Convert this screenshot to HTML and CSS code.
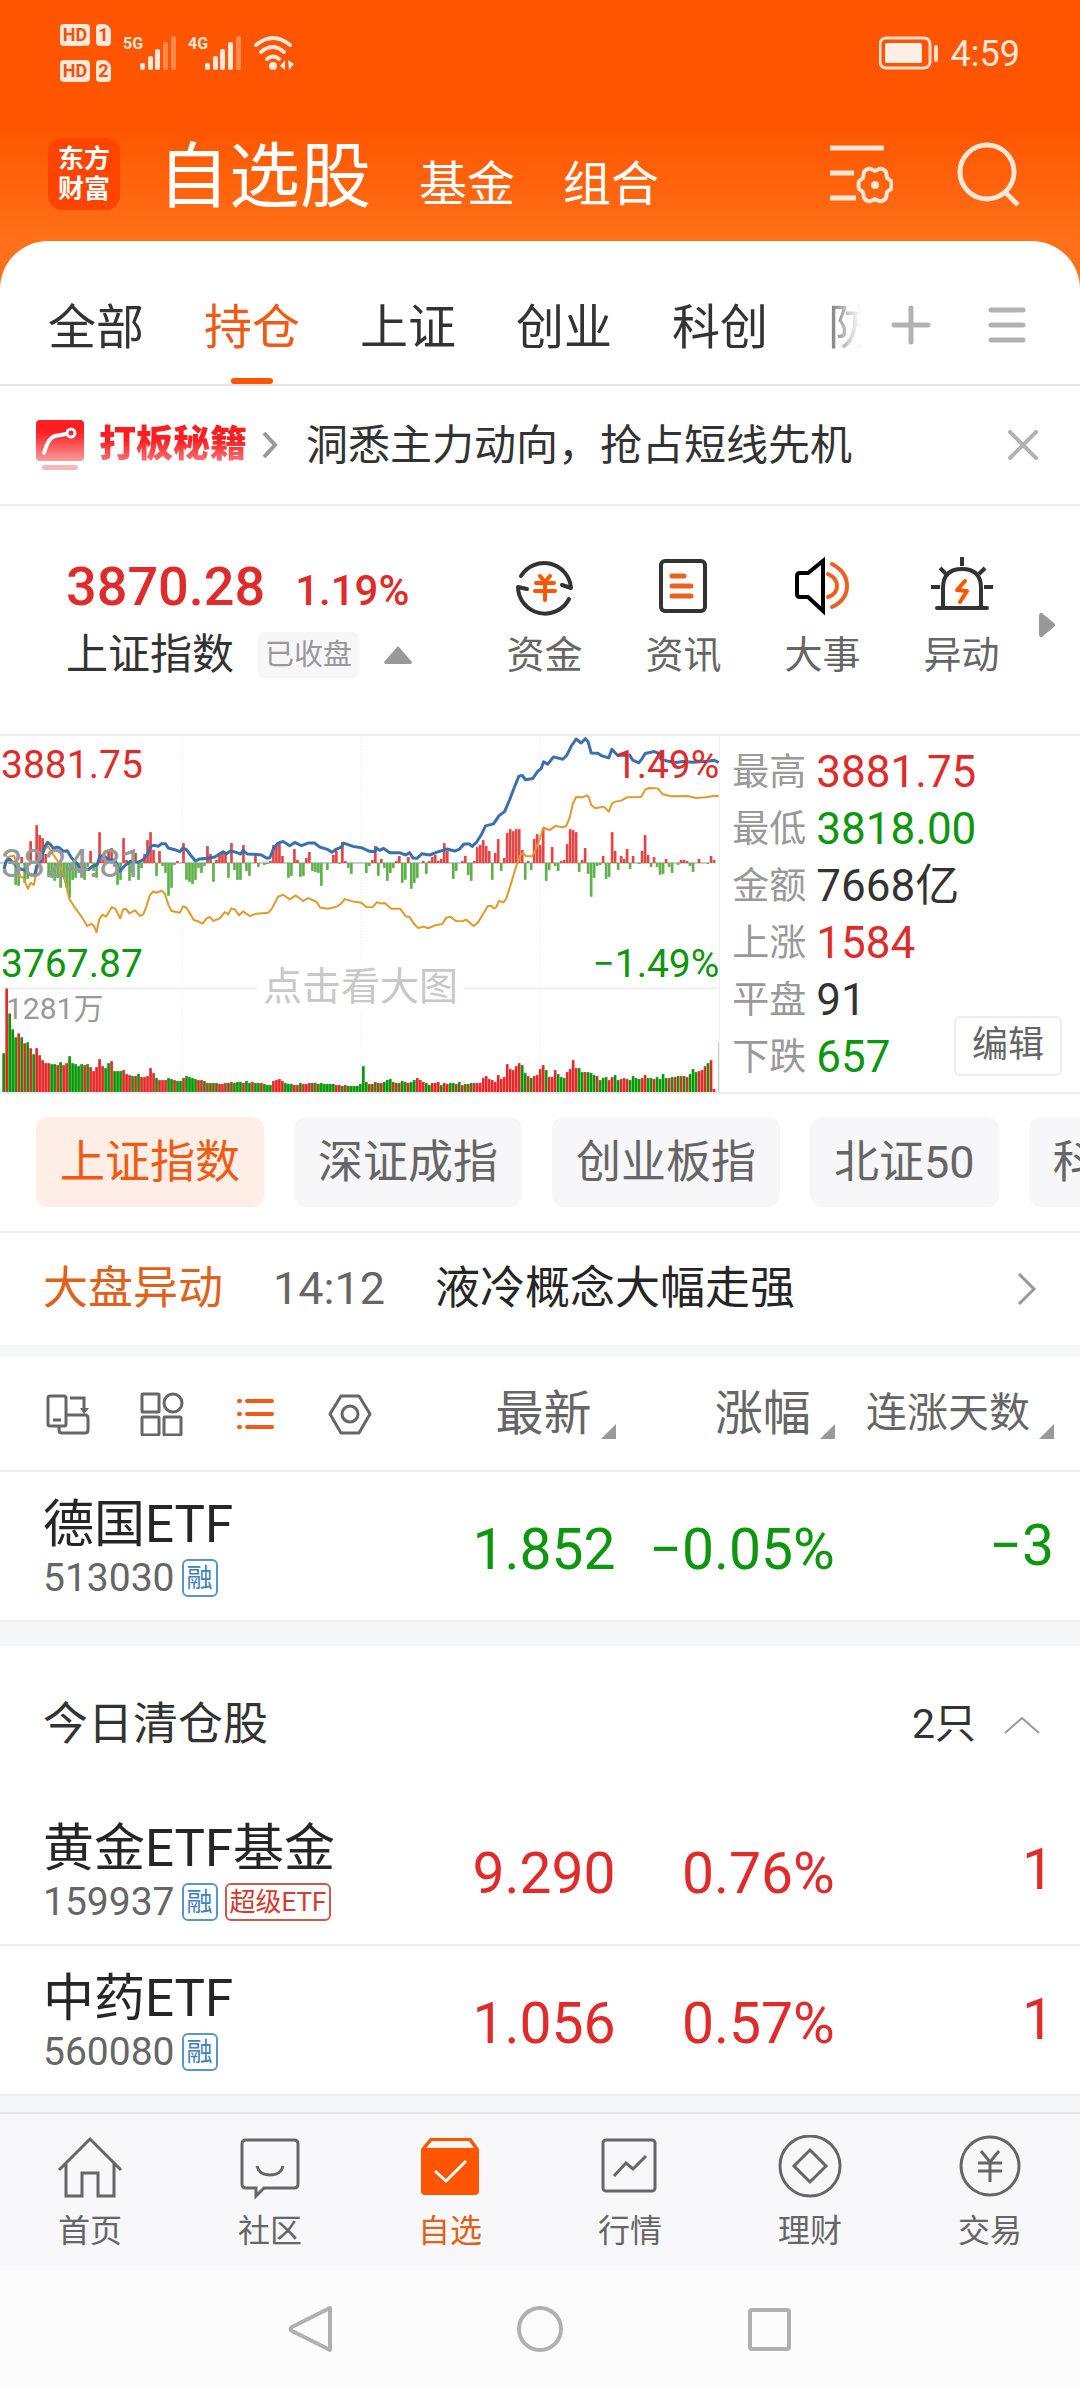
FILE: index.html
```html
<!DOCTYPE html>
<html lang="zh-CN">
<head>
  <meta charset="UTF-8" />
  <meta name="viewport" content="width=device-width, initial-scale=1" />
  <title>自选股</title>
  <link rel="stylesheet" href="styles.css">
</head>
<body>
  <header class="top">
    <div class="status-bar">
      <div class="status-left">
        <div class="sims">
          <div class="sim"><span class="hd">HD</span><span class="sim-no">1</span></div>
          <div class="sim"><span class="hd">HD</span><span class="sim-no">2</span></div>
        </div>
        <div class="signal">
          <span class="net">5G</span>
          <svg width="36" height="34" viewBox="0 0 36 34">
            <g fill="#ffe8da"><rect x="0" y="27" width="5" height="7" rx="2"/><rect x="8" y="20" width="5" height="14" rx="2"/><rect x="15" y="13" width="5" height="21" rx="2"/></g>
            <g fill="#ff8a4d"><rect x="23" y="6" width="5" height="28" rx="2"/><rect x="31" y="0" width="5" height="34" rx="2"/></g>
          </svg>
        </div>
        <div class="signal">
          <span class="net">4G</span>
          <svg width="36" height="34" viewBox="0 0 36 34">
            <g fill="#ffe8da"><rect x="0" y="27" width="5" height="7" rx="2"/><rect x="8" y="20" width="5" height="14" rx="2"/><rect x="15" y="13" width="5" height="21" rx="2"/><rect x="23" y="6" width="5" height="28" rx="2"/></g>
            <rect x="31" y="0" width="5" height="34" rx="2" fill="#ff8a4d"/>
          </svg>
        </div>
        <svg width="42" height="36" viewBox="0 0 42 36">
          <g fill="none" stroke="#ffe8da" stroke-width="4" stroke-linecap="round"><path d="M3 10Q20 -4 37 10"/><path d="M8 17Q20 7 31 17"/><path d="M14 24Q20 19 26 24"/></g>
          <circle cx="20" cy="31" r="4" fill="#ffe8da"/>
          <path d="M27 31L32 25V35ZM35 25L41 29L36 35Z" fill="#ffe8da"/>
        </svg>
      </div>
      <div class="status-right">
        <svg width="60" height="34" viewBox="0 0 60 34">
          <rect x="1" y="2" width="50" height="30" rx="6" fill="none" stroke="#ffe0cf" stroke-width="3"/>
          <rect x="6" y="7" width="37" height="20" rx="2" fill="#ffeee6"/>
          <rect x="55" y="9" width="4" height="17" rx="2" fill="#ffe0cf"/>
        </svg>
        <span class="clock">4:59</span>
      </div>
    </div>
    <div class="app-bar">
      <div class="logo">东方<br>财富</div>
      <nav class="app-nav">
        <a class="current" href="#">自选股</a>
        <a href="#">基金</a>
        <a href="#">组合</a>
      </nav>
      <button class="icon-btn" aria-label="设置">
        <svg width="64" height="60" viewBox="0 0 64 60" fill="none" stroke="#ffe6d6" stroke-width="5">
          <path d="M1 4H55M1 29H25M1 54H27"/>
          <path transform="translate(46 41)" stroke-width="4" stroke-linejoin="round" d="M16 4L12 7L11 13Q8 17 4 16L0 14L-4 16Q-8 17 -11 13L-12 7L-16 4Q-17 0 -16 -4L-12 -7L-11 -13Q-8 -17 -4 -16L0 -14L4 -16Q8 -17 11 -13L12 -7L16 -4Q17 0 16 4Z"/>
          <circle cx="46" cy="41" r="4" fill="#ffe6d6" stroke="none"/>
        </svg>
      </button>
      <button class="icon-btn" aria-label="搜索">
        <svg width="64" height="66" viewBox="0 0 64 66" fill="none" stroke="#ffe6d6" stroke-width="5">
          <circle cx="30" cy="31" r="27"/>
          <path d="M48 51L61 64"/>
        </svg>
      </button>
    </div>
  </header>

  <main>
    <div class="tabs">
      <nav class="tab-list">
        <a href="#">全部</a>
        <a class="active" href="#">持仓</a>
        <a href="#">上证</a>
        <a href="#">创业</a>
        <a href="#">科创</a>
        <a href="#">防御</a>
      </nav>
      <button class="icon-btn" aria-label="添加">
        <svg width="40" height="40" viewBox="0 0 40 40" stroke="#b2b2b2" stroke-width="5" stroke-linecap="round"><path d="M3 20H37M20 3V37"/></svg>
      </button>
      <button class="icon-btn" aria-label="更多分组">
        <svg width="40" height="40" viewBox="0 0 40 40" stroke="#b2b2b2" stroke-width="5" stroke-linecap="round"><path d="M4 5H36M4 20H36M4 35H36"/></svg>
      </button>
    </div>

    <div class="promo">
      <svg width="48" height="50" viewBox="0 0 48 50">
        <defs><linearGradient id="promoRed" x1="0" y1="0" x2="0" y2="1"><stop offset="0" stop-color="#fb1f22"/><stop offset="0.3" stop-color="#fb1f22"/><stop offset="1" stop-color="#f99a9a"/></linearGradient></defs>
        <rect width="48" height="41" rx="4" fill="url(#promoRed)"/>
        <rect x="6" y="45" width="36" height="5" rx="2" fill="#f9b8b8"/>
        <path d="M8 33Q12 18 19 16L30 14" fill="none" stroke="#fff" stroke-width="4" stroke-linecap="round"/>
        <circle cx="35" cy="13" r="4" fill="none" stroke="#fff" stroke-width="3"/>
      </svg>
      <strong>打板秘籍</strong>
      <svg width="16" height="28" viewBox="0 0 16 28" fill="none" stroke="#999" stroke-width="4"><path d="M2 2L13 14L2 26"/></svg>
      <a href="#">洞悉主力动向，抢占短线先机</a>
      <button class="icon-btn" aria-label="关闭">
        <svg width="30" height="30" viewBox="0 0 30 30" stroke="#b2b2b2" stroke-width="4" stroke-linecap="round"><path d="M2 2L28 28M28 2L2 28"/></svg>
      </button>
    </div>

    <section class="summary">
      <div class="index">
        <div class="index-value"><b>3870.28</b><span>1.19%</span></div>
        <div class="index-name">
          <span>上证指数</span>
          <span class="closed">已收盘</span>
          <svg width="28" height="18" viewBox="0 0 28 18"><path d="M14 0L28 16Q28 18 26 18H2Q0 18 0 16Z" fill="#999"/></svg>
        </div>
      </div>
      <nav class="actions">
        <a href="#">
          <svg width="64" height="64" viewBox="0 0 64 64" fill="none" stroke="#333" stroke-width="4" stroke-linecap="round" stroke-linejoin="round">
            <path d="M8 22A27 27 0 0 1 58 34L49 31M56 45A27 27 0 0 1 5 33L14 35"/>
            <path d="M27 22L32 28L37 22M23 29H41M22 37H42M32 29V46" stroke="#ff5500"/>
          </svg>
          资金
        </a>
        <a href="#">
          <svg width="64" height="64" viewBox="0 0 64 64" fill="none" stroke="#333" stroke-width="4" stroke-linecap="round">
            <rect x="9" y="7" width="44" height="50" rx="4"/>
            <path d="M20 22H32M20 32H39M20 42H39" stroke="#eb6120" stroke-width="5"/>
          </svg>
          资讯
        </a>
        <a href="#">
          <svg width="64" height="64" viewBox="0 0 64 64" fill="none" stroke="#000" stroke-width="4">
            <path d="M6 22Q6 19 9 19H17L32 7V57L17 43H9Q6 43 6 40Z"/>
            <path d="M37 20Q46 24 46 32T37 43M41 10Q56 18 56 32T41 53" stroke="#eb6120" stroke-linecap="round"/>
          </svg>
          大事
        </a>
        <a href="#">
          <svg width="64" height="64" viewBox="0 0 64 64" fill="none" stroke="#333" stroke-width="4" stroke-linejoin="round">
            <path d="M13 54V34Q13 15 32 15T51 34V54M7 54H57" stroke-linecap="round"/>
            <path d="M32 3V12M10 14L16 20M55 14L49 20M1 33H10M54 33H63"/>
            <path d="M35 27L27 36L37 37L30 48" stroke="#ff5500" stroke-linecap="round"/>
          </svg>
          异动
        </a>
      </nav>
      <svg class="next" width="16" height="26" viewBox="0 0 16 26"><path d="M0 3Q1 -1 4 2L15 11Q17 13 15 15L4 24Q1 27 0 23Z" fill="#999"/></svg>
    </section>

    <section class="market">
      <div class="chart">
        <svg id="chart" viewBox="0 27 2160 1074" preserveAspectRatio="none"></svg>
        <span class="lbl high up">3881.75</span>
        <span class="lbl high right up">1.49%</span>
        <span class="lbl mid">3824.81</span>
        <span class="lbl low down">3767.87</span>
        <span class="lbl low right down">−1.49%</span>
        <span class="lbl vol">1281万</span>
        <a class="enlarge" href="#">点击看大图</a>
      </div>
      <div class="stats">
        <dl>
          <div><dt>最高</dt><dd class="up">3881.75</dd></div>
          <div><dt>最低</dt><dd class="down">3818.00</dd></div>
          <div><dt>金额</dt><dd>7668亿</dd></div>
          <div><dt>上涨</dt><dd class="up">1584</dd></div>
          <div><dt>平盘</dt><dd>91</dd></div>
          <div><dt>下跌</dt><dd class="down">657</dd></div>
        </dl>
        <button class="edit">编辑</button>
      </div>
    </section>

    <div class="chips">
      <button class="active">上证指数</button>
      <button>深证成指</button>
      <button>创业板指</button>
      <button>北证50</button>
      <button>科创50</button>
    </div>

    <a class="news" href="#">
      <strong>大盘异动</strong>
      <time>14:12</time>
      <span>液冷概念大幅走强</span>
      <svg width="20" height="32" viewBox="0 0 20 32" fill="none" stroke="#999" stroke-width="3"><path d="M2 1L17 16L2 31"/></svg>
    </a>

    <table class="stocks">
      <colgroup><col class="c-name"><col class="c-price"><col class="c-pct"><col></colgroup>
      <thead>
        <tr>
          <th>
            <div class="tools">
              <button class="icon-btn" aria-label="横屏">
                <svg width="44" height="44" viewBox="0 0 44 44" fill="none" stroke="#666" stroke-width="3">
                  <rect x="2" y="4" width="18" height="30" rx="2"/><path d="M7 28H15M13 34V38Q13 41 16 41H39Q42 41 42 38V26Q42 23 39 23H20M24 6H38V18"/><path d="M34 16H43L38 22Z" fill="#666" stroke="none"/>
                </svg>
              </button>
              <button class="icon-btn" aria-label="宫格">
                <svg width="44" height="44" viewBox="0 0 44 44" fill="none" stroke="#666" stroke-width="3">
                  <rect x="2" y="2" width="17" height="18" rx="1"/><circle cx="33" cy="11" r="9"/><rect x="2" y="25" width="17" height="18" rx="1"/><rect x="24" y="25" width="17" height="18" rx="1"/>
                </svg>
              </button>
              <button class="icon-btn" aria-label="列表">
                <svg width="44" height="44" viewBox="0 0 44 44" fill="none" stroke="#f05a14" stroke-width="4" stroke-linecap="round"><path d="M13 9H38M13 22H38M13 35H38M5 9H6M5 22H6M5 35H6"/></svg>
              </button>
              <button class="icon-btn" aria-label="列表设置">
                <svg width="44" height="44" viewBox="0 0 44 44" fill="none" stroke="#666" stroke-width="3" stroke-linejoin="round"><path d="M13 4H31L42 22L31 41H13L2 22Z"/><circle cx="22" cy="22" r="8"/></svg>
              </button>
            </div>
          </th>
          <th><button class="sort">最新</button></th>
          <th><button class="sort">涨幅</button></th>
          <th><button class="sort small">连涨天数</button></th>
        </tr>
      </thead>
      <tbody>
        <tr>
          <td><div class="name">德国ETF</div><div class="code">513030<i>融</i></div></td>
          <td class="down">1.852</td>
          <td class="down">−0.05%</td>
          <td class="down">−3</td>
        </tr>
      </tbody>
    </table>

    <section class="cleared">
      <div class="cleared-head">
        <h2>今日清仓股</h2>
        <span>2只</span>
        <button class="icon-btn" aria-label="收起">
          <svg width="36" height="18" viewBox="0 0 36 18" fill="none" stroke="#999" stroke-width="2"><path d="M1 17L18 2L35 17"/></svg>
        </button>
      </div>
      <table class="stocks">
        <colgroup><col class="c-name"><col class="c-price"><col class="c-pct"><col></colgroup>
        <tbody>
          <tr>
            <td><div class="name">黄金ETF基金</div><div class="code">159937<i>融</i><i class="super">超级ETF</i></div></td>
            <td class="up">9.290</td>
            <td class="up">0.76%</td>
            <td class="up">1</td>
          </tr>
          <tr>
            <td><div class="name">中药ETF</div><div class="code">560080<i>融</i></div></td>
            <td class="up">1.056</td>
            <td class="up">0.57%</td>
            <td class="up">1</td>
          </tr>
        </tbody>
      </table>
    </section>
  </main>

  <footer>
    <nav class="bottom-nav">
      <a href="#">
        <svg width="66" height="64" viewBox="0 0 66 64" fill="none" stroke="#666" stroke-width="3"><path d="M2 35L33 4L64 35M9 29V61H25V38H41V61H57V29"/></svg>
        首页
      </a>
      <a href="#">
        <svg width="66" height="64" viewBox="0 0 66 64" fill="none" stroke="#666" stroke-width="3"><path d="M9 5H57Q61 5 61 9V49Q61 53 57 53H27L19 61V53H9Q5 53 5 49V9Q5 5 9 5Z"/><path d="M20 31Q22 40 33 40T46 31"/></svg>
        社区
      </a>
      <a class="active" href="#">
        <svg width="66" height="64" viewBox="0 0 66 64"><path d="M13 3H54L62 14V56Q62 60 58 60H8Q4 60 4 56V14Z" fill="#ff5500"/><path d="M15 6H52L57 13H9Z" fill="#fff4ee"/><path d="M18 36L29 46L49 26" fill="none" stroke="#fff" stroke-width="3"/></svg>
        自选
      </a>
      <a href="#">
        <svg width="66" height="64" viewBox="0 0 66 64" fill="none" stroke="#666" stroke-width="3"><rect x="6" y="5" width="52" height="51" rx="3"/><path d="M17 41L29 28L36 34L49 21"/></svg>
        行情
      </a>
      <a href="#">
        <svg width="66" height="64" viewBox="0 0 66 64" fill="none" stroke="#666" stroke-width="3"><circle cx="33" cy="31" r="30"/><path d="M33 15L49 31L33 47L17 31Z"/></svg>
        理财
      </a>
      <a href="#">
        <svg width="66" height="64" viewBox="0 0 66 64" fill="none" stroke="#666" stroke-width="3"><circle cx="33" cy="31" r="29"/><path d="M24 16L33 27L42 16M21 28H45M21 36H45M33 27V47"/></svg>
        交易
      </a>
    </nav>
    <div class="system-nav">
      <button class="icon-btn" aria-label="返回"><svg width="48" height="48" viewBox="0 0 48 48" fill="none" stroke="#b0b0b0" stroke-width="4" stroke-linejoin="round"><path d="M43 3V45L5 26Q2 24 5 22Z"/></svg></button>
      <button class="icon-btn" aria-label="主屏幕"><svg width="48" height="48" viewBox="0 0 48 48" fill="none" stroke="#b0b0b0" stroke-width="4"><circle cx="24" cy="24" r="21"/></svg></button>
      <button class="icon-btn" aria-label="最近任务"><svg width="48" height="48" viewBox="0 0 48 48" fill="none" stroke="#b0b0b0" stroke-width="4"><rect x="5" y="5" width="39" height="39" rx="2"/></svg></button>
    </div>
  </footer>

  <script>
    // One value per minute: above zero is red, below zero is green
    const momentum = [
      0,0,0,0,-22,-23,6,-20,-16,22, 0,38,28,25,9,-12,-15,-18,-15,-25,
      -12,-25,-35,-17,-15,-10,-15,-17,-4,12, -8,-15,31,8,7,12,15,-4,-22,-17,
      25,3,-18,-10,10,-17,-5,9,23,31, 13,-13,12,-3,-10,-33,-25,-2,2,0,
      20,-17,-19,-21,-17,-5,-10,-3,17,9, -19,3,8,12,11,-15,20,-7,-17,-17,
      18,-8,-13,0,8,-4,0,-2,-1,2, 18,17,20,7,0,-15,-13,14,3,-14,
      -13,5,11,-8,-9,-10,-23,0,-7,0, 8,12,-1,21,2,-5,-11,0,0,0,
      0,-10,-3,3,17,-13,4,-5,-18,-10, -5,2,7,-20,-17,6,-26,-20,-15,0,
      2,-11,2,6,8,2,4,20,12,0, -16,-8,0,2,7,-12,-18,2,16,18,
      23,17,12,-17,10,24,-8,5,30,34, 32,34,34,13,-17,2,-7,24,29,18,
      35,-18,-7,16,-3,-8,2,3,19,34, 33,31,-9,3,15,-11,-34,-15,-3,-2,
      7,-16,-14,31,12,-7,7,4,14,-6, 7,0,-1,12,28,8,-4,6,-4,-12,
      -11,4,-4,-10,0,-2,3,3,2,-3, -9,0,4,0,0,-1,7,3,0,0
    ];

    // Volume per minute, the sign is the direction of the minute
    const volume = [
      -39,104,-79,-63,-55,59,-55,49,-50,44, -38,44,37,32,29,29,-28,-28,27,-30,
      27,29,-36,-29,-28,-26,-28,27,-28,25, 21,25,33,26,-24,-29,31,-21,-21,-21,
      22,18,17,-16,16,-18,15,15,16,24, 19,-14,12,12,12,-14,-13,12,-11,-11,
      14,-16,-15,-14,-13,12,12,-11,9,-9, 9,-9,8,8,9,-9,10,-9,-10,-10,
      9,-11,-9,10,-9,-9,9,-8,-7,-7, 11,12,13,11,-9,-8,-8,7,7,-9,
      8,8,9,-9,9,-8,-9,-8,-8,-8, -8,7,7,-6,7,-6,-6,-6,-6,-8,
      -26,-10,8,-8,10,-9,9,-10,-12,-13, 10,-9,9,-11,-10,9,-10,-12,14,12,
      10,-9,-7,9,9,10,-7,9,8,-9, -9,8,-10,7,-8,8,-9,9,9,9,
      14,16,13,12,10,17,13,15,28,23, 22,26,29,-27,-19,16,-14,16,17,23,
      27,-22,15,15,22,-18,-15,-14,20,23, 32,24,-24,-20,20,-20,-19,-17,16,-12,
      -14,-15,12,15,-17,-12,13,14,13,-12, -16,-14,-13,14,17,-14,-14,13,-15,-13,
      -18,-14,14,-15,15,-16,16,-16,15,-18, -23,-20,21,22,26,-29,32,3,0,-50
    ];

    const price = "12,428 18,405 28,398 38,408 50,420 65,430 80,432 88,445 104,447 110,420 122,405 132,365 143,348 152,355 160,366 170,362 180,365 190,375 202,373 215,395 230,410 240,425 265,430 275,422 292,415 300,388 312,390 325,398 345,402 360,435 375,418 392,405 415,408 430,400 442,385 455,358 465,357 475,360 485,352 497,352 505,365 525,370 540,376 549,365 560,370 575,390 587,404 600,398 625,396 645,392 660,382 670,376 680,382 692,374 710,378 722,383 730,372 742,383 765,384 785,386 800,395 810,395 822,365 835,350 850,345 870,358 885,348 905,358 925,350 945,350 960,362 985,370 997,378 1010,368 1025,362 1032,350 1060,360 1085,364 1110,375 1125,376 1130,365 1140,372 1152,366 1170,379 1200,379 1218,386 1230,379 1240,395 1252,396 1267,382 1290,386 1310,378 1342,368 1365,374 1380,368 1393,353 1410,353 1418,360 1432,346 1445,325 1458,298 1482,292 1498,268 1515,255 1530,220 1545,180 1558,148 1568,146 1578,159 1600,155 1615,133 1625,125 1632,105 1645,112 1662,90 1690,97 1702,85 1715,58 1730,36 1745,48 1758,35 1766,45 1775,78 1795,79 1805,86 1828,93 1837,67 1855,86 1890,84 1900,100 1918,108 1928,95 1937,80 1965,74 1975,78 1985,97 2005,103 2030,107 2050,104 2080,106 2125,103 2145,100 2158,107";
    const average = "12,440 22,392 42,388 50,408 60,450 70,455 84,488 92,470 102,476 108,445 118,405 132,375 143,358 155,378 165,392 178,412 188,440 198,475 208,518 225,545 245,572 262,600 275,594 282,600 290,619 298,580 308,566 318,572 336,543 346,548 361,577 370,550 378,548 388,562 406,553 420,570 430,565 440,540 450,507 460,496 470,500 485,494 495,502 505,535 515,555 540,560 549,541 560,545 582,582 595,586 608,593 620,578 630,573 640,585 660,577 675,558 685,565 695,547 705,550 718,568 730,556 750,570 770,563 805,560 815,550 835,512 850,506 870,520 888,508 910,525 925,516 950,527 962,545 985,548 1010,542 1025,532 1035,519 1060,526 1085,530 1100,543 1118,544 1132,528 1142,532 1155,531 1175,548 1202,548 1218,571 1230,573 1242,592 1255,606 1272,602 1285,607 1310,597 1328,594 1340,575 1352,572 1370,586 1390,585 1400,581 1422,600 1435,590 1450,565 1465,540 1475,539 1482,547 1490,543 1498,525 1512,529 1520,518 1535,470 1550,420 1562,388 1570,380 1580,390 1598,389 1608,370 1620,340 1632,303 1650,311 1668,298 1685,302 1700,299 1710,275 1720,232 1730,211 1748,212 1762,206 1768,212 1775,235 1788,245 1813,240 1828,255 1838,230 1848,225 1865,222 1883,212 1925,211 1938,188 1950,184 1975,185 1990,203 2015,209 2065,208 2090,214 2120,212 2145,207 2158,208";

    function drawChart() {
      const zero = 410;
      const bottom = 1101;
      let out = '<path class="grid" d="M0 788H2160"/>';
      out += '<path class="dots" d="M547 30V1101M1084 30V1101M1622 30V1101"/>';
      out += `<path class="zero" d="M0 ${zero}H2130"/>`;

      momentum.forEach((v, i) => {
        if (!v) return;
        const h = Math.abs(v) * 3;
        const y = v > 0 ? zero - h : zero;
        out += `<rect class="${v > 0 ? "m-up" : "m-down"}" x="${i * 9 + 7}" y="${y}" width="8" height="${h}"/>`;
      });

      volume.forEach((v, i) => {
        const h = Math.abs(v) * 3;
        out += `<rect class="${v > 0 ? "v-up" : "v-down"}" x="${i * 9 + 7}" y="${bottom - h}" width="8" height="${h}"/>`;
      });

      out += `<polyline class="average" points="${average}"/>`;
      out += `<polyline class="price" points="${price}"/>`;
      document.getElementById("chart").innerHTML = out;
    }

    drawChart();
  </script>
</body>
</html>
```
FILE: styles.css
```css
* {
  box-sizing: border-box;
}

body {
  margin: 0;
  background-color: #fff;
  color: #333;
  font-family: Roboto, "Noto Sans CJK SC", sans-serif;
  font-size: 45px;
  line-height: 1.2;
}

a {
  color: inherit;
  text-decoration: none;
}

button {
  border: none;
  padding: 0;
  background: none;
  color: inherit;
  font: inherit;
  cursor: pointer;
}

svg {
  display: block;
  flex-shrink: 0;
}

.icon-btn {
  display: block;
  flex-shrink: 0;
}

.up {
  color: #e02b2b;
}

.down {
  color: #0f960f;
}

/* header */
.top {
  background: linear-gradient(#ff5500 0, #ff5500 125px, #ff7018 241px);
  padding-bottom: 48px;
}

.status-bar {
  display: flex;
  justify-content: space-between;
  align-items: center;
  height: 106px;
  padding: 0 60px;
  color: #ffe8da;
}

.status-left,
.status-right,
.signal,
.sim {
  display: flex;
  align-items: center;
}

.status-left {
  gap: 12px;
}

.status-right {
  gap: 12px;
}

.sims {
  display: flex;
  flex-direction: column;
  gap: 14px;
}

.sim {
  gap: 6px;
}

.hd,
.sim-no {
  background-color: #ffe8da;
  color: #f4500a;
  border-radius: 4px;
  font-size: 18px;
  font-weight: 700;
  line-height: 22px;
  text-align: center;
}

.hd {
  width: 30px;
}

.sim-no {
  width: 15px;
  border-top-right-radius: 8px;
}

.signal {
  align-items: flex-start;
}

.net {
  width: 17px;
  font-size: 16px;
  font-weight: 700;
  line-height: 16px;
  white-space: nowrap;
}

.clock {
  padding-top: 3px;
  font-size: 36px;
}

.app-bar {
  display: flex;
  align-items: center;
  height: 135px;
  padding: 0 59px 0 48px;
}

.logo {
  width: 72px;
  height: 72px;
  padding-top: 6px;
  border-radius: 14px;
  background-color: #ff4400;
  color: #fff;
  font-size: 26px;
  font-weight: 700;
  line-height: 30px;
  text-align: center;
}

.app-nav {
  display: flex;
  flex: 1;
  align-items: baseline;
  gap: 48px;
  margin-left: 38px;
  padding-top: 6px;
  color: #fff;
  font-size: 48px;
}

.app-nav .current {
  font-size: 71px;
}

.app-bar .icon-btn + .icon-btn {
  margin-left: 64px;
}

/* group tabs */
main {
  margin-top: -48px;
  border-radius: 48px 48px 0 0;
  background-color: #fff;
}

.tabs {
  display: flex;
  align-items: center;
  height: 145px;
  padding: 24px 53px 0 48px;
  border-bottom: 2px solid #e6e6e6;
}

.tab-list {
  display: flex;
  flex: 1;
  gap: 60px;
  height: 100%;
  margin-right: 30px;
  overflow: hidden;
  font-size: 48px;
  line-height: 126px;
  white-space: nowrap;
  -webkit-mask-image: linear-gradient(to right, #000 94%, transparent);
  mask-image: linear-gradient(to right, #000 94%, transparent);
}

.tab-list .active {
  position: relative;
  height: 119px;
  color: #f05a14;
}

.tab-list .active::after {
  content: "";
  position: absolute;
  left: 27px;
  bottom: 0;
  width: 42px;
  height: 6px;
  border-radius: 3px;
  background-color: #ff5500;
}

.tabs .icon-btn + .icon-btn {
  margin-left: 56px;
}

.promo {
  display: flex;
  align-items: center;
  height: 120px;
  padding: 0 42px 0 36px;
  border-bottom: 2px solid #ededed;
  font-size: 42px;
}

.promo strong {
  margin: 0 15px;
  font-size: 37px;
  font-weight: 900;
  background: linear-gradient(#fb1f22 40%, #f88a8a);
  -webkit-background-clip: text;
  background-clip: text;
  color: transparent;
}

.promo a {
  flex: 1;
  margin-left: 28px;
  padding-top: 2px;
}

/* index summary */
.summary {
  display: flex;
  height: 228px;
  padding: 48px 25px 0 66px;
}

.index {
  flex: 1;
}

.index-value {
  display: flex;
  align-items: baseline;
  gap: 30px;
  color: #e02b2b;
  font-size: 42px;
  font-weight: 500;
  line-height: 66px;
}

.index-value b {
  font-size: 54px;
  font-weight: 500;
}

.index-name {
  display: flex;
  align-items: center;
  margin-top: 8px;
  font-size: 42px;
  line-height: 46px;
}

.closed {
  margin: 0 25px 0 24px;
  padding: 0 7px;
  border-radius: 6px;
  background-color: #f7f7f9;
  color: #999;
  font-size: 29px;
}

.actions {
  display: flex;
}

.actions a {
  display: flex;
  flex-direction: column;
  align-items: center;
  gap: 14px;
  width: 139px;
  color: #666;
  font-size: 38px;
  line-height: 46px;
}

.next {
  margin: 58px 0 0 8px;
}

/* chart and figures */
.market {
  display: flex;
  border-top: 2px solid #ededed;
  border-bottom: 2px solid #ededed;
}

.chart {
  position: relative;
  width: 66.7%;
  border-right: 1px solid #f0f0f2;
}

.chart #chart {
  width: 100%;
  height: 356px;
}

.grid {
  stroke: #ededed;
  stroke-width: 4;
}

.dots {
  stroke: #e6e6e6;
  stroke-width: 3;
  stroke-dasharray: 3 6;
}

.zero {
  stroke: #999;
  stroke-width: 3;
}

.m-up {
  fill: #e64545;
}

.m-down {
  fill: #5fb24a;
}

.v-up {
  fill: #e62828;
}

.v-down {
  fill: #089808;
}

.price,
.average {
  fill: none;
  stroke: #3a70b0;
  stroke-width: 9;
  stroke-linejoin: round;
}

.average {
  stroke: #e09a2a;
  stroke-width: 6;
}

.lbl {
  position: absolute;
  left: 1px;
  font-size: 39px;
  line-height: 40px;
}

.high {
  top: 9px;
}

.mid {
  top: 108px;
  color: #999;
}

.low {
  top: 208px;
}

.right {
  left: auto;
  right: 0;
}

.vol {
  top: 253px;
  left: 6px;
  color: #999;
  font-size: 30px;
}

.enlarge {
  position: absolute;
  top: 226px;
  left: 257px;
  padding: 0 6px;
  background-color: #fff;
  color: #c8c8c8;
  font-size: 39px;
  line-height: 50px;
}

.stats {
  position: relative;
  flex: 1;
  padding: 8px 0 0 12px;
}

.stats dl {
  margin: 0;
}

.stats dl div {
  display: flex;
  gap: 10px;
  line-height: 57px;
}

.stats dt {
  color: #999;
  font-size: 37px;
}

.stats dd {
  margin: 0;
  font-size: 44px;
}

.edit {
  position: absolute;
  right: 18px;
  bottom: 16px;
  width: 108px;
  height: 60px;
  border: 2px solid #ededed;
  border-radius: 6px;
  background-color: #fff;
  color: #666;
  font-size: 36px;
}

.chips {
  display: flex;
  gap: 30px;
  padding: 23px 0 24px 36px;
  border-bottom: 2px solid #ededed;
  overflow: hidden;
}

.chips button {
  flex-shrink: 0;
  padding: 2px 24px 0;
  border-radius: 12px;
  background-color: #f7f7f9;
  color: #666;
  line-height: 88px;
}

.chips .active {
  background-color: #ffeee6;
  color: #f05a14;
}

.news {
  display: flex;
  align-items: center;
  height: 124px;
  padding: 0 43px;
  border-bottom: 12px solid #f5f7f9;
  color: #262626;
}

.news strong {
  color: #e0621a;
  font-weight: 400;
}

.news time {
  margin: 0 50px;
  color: #666;
}

.news span {
  flex: 1;
}

/* stock lists */
.stocks {
  width: 100%;
  border-collapse: separate;
  border-spacing: 0;
  table-layout: fixed;
}

.c-name {
  width: 36%;
}

.c-price {
  width: 21%;
}

.c-pct {
  width: 20.3%;
}

.stocks th {
  height: 115px;
  padding: 0;
  border-bottom: 2px solid #ededed;
  font-weight: 400;
}

.tools {
  display: flex;
  gap: 50px;
  padding-left: 46px;
}

.sort {
  display: flex;
  align-items: center;
  gap: 9px;
  margin-left: auto;
  color: #666;
  font-size: 48px;
  white-space: nowrap;
}

.sort.small {
  font-size: 41px;
}

.sort::after {
  content: "";
  margin-top: 36px;
  border-left: 15px solid transparent;
  border-bottom: 15px solid #999;
}

.stocks td {
  height: 150px;
  padding: 8px 0 0;
  border-bottom: 2px solid #ededed;
  text-align: right;
  font-size: 57px;
}

.stocks td:first-child {
  padding: 4px 0 0 43px;
  text-align: left;
}

.stocks th:last-child {
  padding-right: 26px;
}

.stocks td:last-child {
  padding: 0 26px 0 0;
}

.name {
  color: #262626;
  font-size: 51px;
  line-height: 60px;
  white-space: nowrap;
}

.code {
  display: flex;
  align-items: center;
  color: #666;
  font-size: 39px;
  line-height: 46px;
}

.code i {
  margin-left: 7px;
  padding: 0 3px;
  border: 2px solid #5a94cc;
  border-radius: 6px;
  color: #4080c0;
  font-size: 26px;
  font-style: normal;
  line-height: 34px;
}

.code .super {
  border-color: #cc5a50;
  color: #d03c32;
}

.cleared {
  border-top: 24px solid #f5f7f9;
}

.cleared-head {
  display: flex;
  align-items: center;
  height: 150px;
  padding: 8px 40px 0 43px;
  font-size: 41px;
}

.cleared-head h2 {
  flex: 1;
  margin: 0;
  font-size: 45px;
  font-weight: 400;
}

.cleared-head .icon-btn {
  margin-left: 28px;
}

/* bottom bars */
footer {
  display: flow-root;
  background-color: #f5f7f9;
}

.bottom-nav {
  display: flex;
  margin-top: 16px;
  padding: 21px 0 19px;
  border-top: 2px solid #e4e5e7;
  background-color: #f8f8fa;
}

.bottom-nav a {
  display: flex;
  flex: 1;
  flex-direction: column;
  align-items: center;
  gap: 12px;
  color: #666;
  font-size: 32px;
  line-height: 40px;
}

.bottom-nav .active {
  color: #e0621a;
}

.system-nav {
  display: flex;
  justify-content: center;
  align-items: center;
  gap: 181px;
  height: 118px;
  background-color: #fcfcfc;
}
```
